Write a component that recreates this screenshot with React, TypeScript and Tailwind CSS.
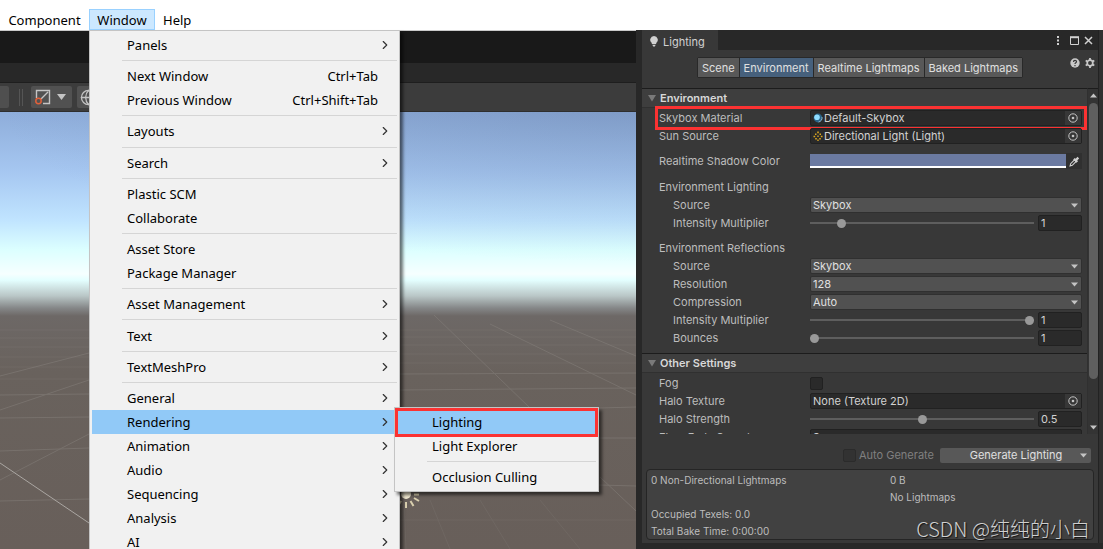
import React from 'react';
import { ChevronRight, Globe } from 'lucide-react';

type MenuEntry = { label: string; shortcut?: string; sub?: boolean } | 'sep';

const windowMenu: MenuEntry[] = [
  { label: 'Panels', sub: true },
  'sep',
  { label: 'Next Window', shortcut: 'Ctrl+Tab' },
  { label: 'Previous Window', shortcut: 'Ctrl+Shift+Tab' },
  'sep',
  { label: 'Layouts', sub: true },
  'sep',
  { label: 'Search', sub: true },
  'sep',
  { label: 'Plastic SCM' },
  { label: 'Collaborate' },
  'sep',
  { label: 'Asset Store' },
  { label: 'Package Manager' },
  'sep',
  { label: 'Asset Management', sub: true },
  'sep',
  { label: 'Text', sub: true },
  'sep',
  { label: 'TextMeshPro', sub: true },
  'sep',
  { label: 'General', sub: true },
  { label: 'Rendering', sub: true },
  { label: 'Animation', sub: true },
  { label: 'Audio', sub: true },
  { label: 'Sequencing', sub: true },
  { label: 'Analysis', sub: true },
  { label: 'AI', sub: true },
];

const Separator = () => (
  <li role="separator" className="flex min-h-[7px] grow items-center pl-[30px]">
    <span className="h-px w-full bg-[#d5d5d5]" />
  </li>
);

/* Submenu that opens next to "Rendering" */
const RenderingMenu = () => (
  <ul className="absolute -top-[3px] left-[302px] z-30 w-[205px] border border-[#c4c4c4] bg-[#f1f1f1] p-[2px] shadow-[3px_3px_3px_rgba(0,0,0,0.55)]">
    <li className="relative">
      <button className="flex h-6 w-full items-center bg-[#91c9f7] pl-[35px]">Lighting</button>
      <span className="pointer-events-none absolute -inset-x-[2px] -top-[2px] h-[29px] border-[3px] border-[#fb3232]" />
    </li>
    <li>
      <button className="flex h-6 w-full items-center pl-[35px]">Light Explorer</button>
    </li>
    <Separator />
    <li>
      <button className="flex h-6 w-full items-center pl-[35px]">Occlusion Culling</button>
    </li>
  </ul>
);

const WindowMenu = () => (
  <ul className="absolute top-full left-0 z-20 flex h-[527px] w-[311px] flex-col border border-[#c4c4c4] bg-[#f1f1f1] p-[2px] shadow-[3px_3px_3px_rgba(0,0,0,0.55)]">
    {windowMenu.map((entry, index) =>
      entry === 'sep' ? (
        <Separator key={index} />
      ) : (
        <li key={index} className="relative">
          <button
            className={`flex h-6 w-full items-center pr-[5px] pl-[35px] ${
              entry.label === 'Rendering' ? 'bg-[#91c9f7]' : ''
            }`}
          >
            <span className="grow text-left">{entry.label}</span>
            {entry.shortcut && <span className="pr-[14px]">{entry.shortcut}</span>}
            {entry.sub && <ChevronRight className="size-[14px] text-[#333]" />}
          </button>
          {entry.label === 'Rendering' && <RenderingMenu />}
        </li>
      ),
    )}
  </ul>
);

const MenuBar = () => (
  <nav className="flex h-[30px] shrink-0 items-end bg-white font-['Noto_Sans',sans-serif] text-[13px] leading-5 text-black">
    <button className="h-[21px] w-[89px]">Component</button>
    <div className="relative">
      <button className="h-[21px] w-[66px] border border-[#99d1ff] bg-[#cce8ff]">Window</button>
      <WindowMenu />
    </div>
    <button className="h-[21px] px-2">Help</button>
  </nav>
);

/* Side shading of the sky, ground grid, sun gizmo */
const SceneGrid = () => (
  <svg
    className="size-full"
    viewBox="0 112 636 437"
    preserveAspectRatio="xMinYMin slice"
    fill="none"
    stroke="#8a8580"
    strokeWidth="1"
    aria-hidden="true"
  >
    <defs>
      <radialGradient id="sky" cx="1" cy="0" r="1">
        <stop offset="0" stopColor="#50648c" stopOpacity="0.24" />
        <stop offset="1" stopColor="#50648c" stopOpacity="0" />
      </radialGradient>
    </defs>
    <rect x="0" y="112" width="636" height="150" fill="url(#sky)" stroke="none" />
    <g opacity="0.45">
      <path d="M0 480 89 434M0 410 89 380M0 376 89 353" />
      <path d="M0 451 89 448M0 501 89 499M0 418 89 417M0 395 89 394" />
      <path d="M434 315 530 408M490 324 636 395M550 320 636 356M600 477 636 511" />
      <path d="M400 390 636 388M599 408 636 407M599 438 636 438M599 485 636 486M400 374 636 373" />
    </g>
    <g opacity="0.2">
      <path d="M0 379H89M0 367H89M0 357H89M0 347H89M0 338H89M0 330H89" />
      <path d="M400 363H636M400 354H636M400 345H636M400 337H636M400 330H636M404 500 406 549" />
      <path d="M430 500 450 549M480 500 510 549M540 500 580 549M400 520H636" />
    </g>
    <path d="M0 463 89 523" stroke="#aaa6a2" />
    <circle cx="406" cy="494" r="5" fill="#efe7cf" stroke="none" />
    <path
      d="M406 502v6M410.500 501l3 5M414 498l5 3M414 494.500h5M401 501l-3 5"
      stroke="#d9cfae"
      strokeWidth="2"
    />
  </svg>
);

const SceneView = () => (
  <section aria-label="Scene" className="flex min-w-0 flex-[636_1_0%] flex-col">
    <div className="h-[33px] shrink-0 border-t border-[#c9c9c9] bg-[#191919]" />
    <div className="h-5 shrink-0 border-b border-[#1e1e1e] bg-[#282828]" />
    <div className="flex h-[29px] shrink-0 items-center border-b border-[#2e2e2e] bg-[#3c3c3c]">
      <div className="h-[22px] w-[9px] rounded-r-xs bg-[#4f4f4f]" />
      <div className="ml-[10px] h-[17px] w-1 border-x border-[#555]" />
      <button
        aria-label="Tool handle"
        className="ml-2 flex h-[22px] w-[41px] items-center gap-[6px] rounded-xs bg-[#515151] pl-1"
      >
        <svg className="size-4" viewBox="0 0 16 16" fill="none" stroke="#c4c4c4">
          <path d="M1.500 9V1.500h13v13H8M6 10l7-7" strokeWidth="1.400" />
          <circle cx="3.500" cy="12" r="2.700" stroke="#e0603a" strokeWidth="1.500" />
        </svg>
        <svg className="h-[6px] w-[9px]" viewBox="0 0 9 6" fill="#c4c4c4">
          <path d="M0 0h9L4.500 6z" />
        </svg>
      </button>
      <button
        aria-label="Tool rotation"
        className="ml-[5px] flex h-[22px] w-[41px] items-center rounded-xs bg-[#515151] pl-[3px]"
      >
        <Globe className="size-[17px] text-[#c4c4c4]" strokeWidth={1.8} />
      </button>
    </div>
    <div className="min-h-0 grow bg-[linear-gradient(#8eadda_0px,#a6c7f1_60px,#c0e4ff_108px,#dcffff_138px,#f6ffff_162px,#e4ffff_168px,#b9c6c6_184px,#858788_196px,#6d6866_204px,#69625d_260px,#685f5a_437px)]">
      <SceneGrid />
    </div>
  </section>
);

const Arrow = ({ className = '' }: { className?: string }) => (
  <svg className={`h-[5px] w-[7px] ${className}`} viewBox="0 0 7 5" fill="#c4c4c4" aria-hidden="true">
    <path d="M0 0.500h7L3.500 4.500z" />
  </svg>
);

const Row = ({ label, indent, children }: { label: string; indent?: boolean; children?: React.ReactNode }) => (
  <div className="relative flex h-[18px] shrink-0 items-center pr-[5px]">
    <span className={`w-[168px] shrink-0 ${indent ? 'pl-[31px]' : 'pl-[17px]'}`}>{label}</span>
    {children}
  </div>
);

const Dropdown = ({ label, value }: { label: string; value: string }) => (
  <div className="relative flex grow items-center">
    <select
      aria-label={label}
      defaultValue={value}
      className="h-4 w-full appearance-none rounded-xs border border-[#303030] bg-[#515151] pl-[2px] leading-3 text-[#e0e0e0]"
    >
      <option>{value}</option>
    </select>
    <Arrow className="pointer-events-none absolute right-1" />
  </div>
);

const NumberBox = ({ label, value, wide }: { label: string; value: string; wide?: boolean }) => (
  <input
    aria-label={label}
    defaultValue={value}
    className={`h-4 rounded-xs border border-[#212121] bg-[#2a2a2a] px-[2px] text-[#d2d2d2] ${
      wide ? 'w-full' : 'w-11 shrink-0'
    }`}
  />
);

type SliderProps = { label: string; value: number; min?: number; max: number; step?: number };

const SliderField = ({ label, value, min = 0, max, step = 0.1 }: SliderProps) => (
  <div className="flex min-w-0 grow items-center gap-1">
    <input
      type="range"
      aria-label={label}
      min={min}
      max={max}
      step={step}
      defaultValue={value}
      className="h-[10px] min-w-0 grow appearance-none bg-[linear-gradient(#5e5e5e,#5e5e5e)] bg-[length:100%_2px] bg-center bg-no-repeat [&::-webkit-slider-thumb]:size-[9px] [&::-webkit-slider-thumb]:appearance-none [&::-webkit-slider-thumb]:rounded-full [&::-webkit-slider-thumb]:bg-[#999]"
    />
    <NumberBox label={`${label} value`} value={String(value)} />
  </div>
);

const ObjectField = ({ value, icon }: { value: string; icon?: React.ReactNode }) => (
  <div className="flex h-4 grow items-center rounded-xs border border-[#212121] bg-[#2a2a2a] text-[#d2d2d2]">
    <button className="flex h-full grow items-center gap-[1px] pl-[2px]">
      {icon}
      {value}
    </button>
    <button
      aria-label={`Select ${value}`}
      className="flex h-full w-4 items-center justify-center bg-[#373737]"
    >
      <svg className="size-[10px]" viewBox="0 0 10 10" fill="none" stroke="#c4c4c4">
        <circle cx="5" cy="5" r="4.200" />
        <circle cx="5" cy="5" r="1.300" fill="#c4c4c4" stroke="none" />
      </svg>
    </button>
  </div>
);

const SectionHeader = ({ title }: { title: string }) => (
  <button className="flex h-5 shrink-0 items-center border-t border-b border-t-[#1c1c1c] border-b-[#303030] bg-[#3e3e3e] pl-[6px] font-semibold text-[#d8d8d8]">
    <svg className="mr-[4px] size-2" viewBox="0 0 8 8" fill="#7a7a7a">
      <path d="M0 1h8L4 7.500z" />
    </svg>
    {title}
  </button>
);

const MaterialIcon = () => (
  <svg className="size-[10px]" viewBox="0 0 10 10">
    <circle cx="5" cy="5" r="4.400" fill="#2a6488" />
    <circle cx="4" cy="4.300" r="2.800" fill="#8edcff" />
    <path d="M5.500 9A4.200 4.200 0 0 0 9 4" fill="none" stroke="#b9d6e4" strokeWidth="0.700" />
  </svg>
);

const SunIcon = () => (
  <svg className="size-[10px]" viewBox="0 0 10 10" fill="#d9a520">
    <path d="M4.200 0.500h1.600v1.800H4.200zM2 2.500h1.500V4H2zM6.500 2.500H8V4H6.500zM0.500 4.800h1.700v1.500H0.500zM7.800 4.800h1.700v1.500H7.800zM2.200 7h1.600v1.500H2.200zM6.200 7h1.600v1.500H6.200zM4.300 4.500h1.400v1.400H4.300zM4.300 8.500h1.400V10H4.300z" />
  </svg>
);

const tabs = ['Scene', 'Environment', 'Realtime Lightmaps', 'Baked Lightmaps'];

const PanelTop = () => (
  <>
    <div className="flex h-5 shrink-0 items-center bg-[#282828]">
      <div className="flex h-full w-[76px] items-center gap-[5px] bg-[#383838] pt-[3px] pl-2 text-[#d2d2d2]">
        <svg className="h-[11px] w-2" viewBox="0 0 8 11" fill="#d0d0d0">
          <path d="M4 0a3.800 3.800 0 0 0-2.200 6.900V8h4.400V6.900A3.800 3.800 0 0 0 4 0zM2.300 8.700h3.400L4.800 10.500H3.200z" />
        </svg>
        Lighting
      </div>
      <div className="ml-auto flex items-center gap-[5px] pr-[5px]">
        <button aria-label="More">
          <svg className="h-[11px] w-[9px]" viewBox="0 0 9 11" fill="#d0d0d0">
            <path d="M1 1h2v2H1zM1 4.500h2v2H1zM1 8h2v2H1z" />
          </svg>
        </button>
        <button aria-label="Maximize">
          <svg className="size-[9px]" viewBox="0 0 9 9" fill="none" stroke="#d0d0d0">
            <path d="M0.500 1v7.500h8V1M0 1.500h9" />
            <path d="M0 1.200h9" strokeWidth="2" />
          </svg>
        </button>
        <button aria-label="Close">
          <svg className="size-[9px]" viewBox="0 0 9 9" stroke="#d0d0d0" strokeWidth="1.500">
            <path d="M1 1l7 7M8 1l-7 7" />
          </svg>
        </button>
      </div>
    </div>
    <div className="relative flex h-[38px] shrink-0 items-center justify-center pr-[20px] pb-[3px]">
      <div className="flex gap-px rounded-xs border border-[#292929] bg-[#292929]">
        {tabs.map((t) => (
          <button
            key={t}
            className={`h-[19px] px-1 whitespace-nowrap text-[#e0e0e0] ${
              t === 'Environment' ? 'bg-[#46607c]' : 'bg-[#585858]'
            }`}
          >
            {t}
          </button>
        ))}
      </div>
      <div className="absolute top-2 right-[3px] flex gap-[5px]">
        <button aria-label="Help">
          <svg className="size-[10px]" viewBox="0 0 10 10">
            <circle cx="5" cy="5" r="4.700" fill="#c8c8c8" />
            <path d="M3.500 4c0-2 3-2 3-0.300C6.500 4.900 5 4.700 5 6M5 7v1.200" fill="none" stroke="#383838" strokeWidth="1.200" />
          </svg>
        </button>
        <button aria-label="Settings">
          <svg className="size-[10px]" viewBox="0 0 10 10" fill="none" stroke="#c8c8c8">
            <circle cx="5" cy="5" r="2.800" strokeWidth="1.700" />
            <path
              d="M5 0v2M5 8v2M0.700 2.500l1.700 1M7.600 6.500l1.700 1M0.700 7.500l1.700-1M7.600 3.500l1.700-1"
              strokeWidth="1.800"
            />
          </svg>
        </button>
      </div>
    </div>
  </>
);

const Settings = () => (
  <div className="flex min-h-0 grow">
    <div className="flex min-w-0 grow flex-col overflow-hidden">
      <SectionHeader title="Environment" />
      <div className="flex flex-col pt-[1px] pb-[6px]">
        <Row label="Skybox Material">
          <ObjectField value="Default-Skybox" icon={<MaterialIcon />} />
          <span className="pointer-events-none absolute -top-[3px] right-0 left-[13px] h-6 border-[3px] border-[#fb3232]" />
        </Row>
        <Row label="Sun Source">
          <ObjectField value="Directional Light (Light)" icon={<SunIcon />} />
        </Row>
        <div className="h-[7px]" />
        <Row label="Realtime Shadow Color">
          <button aria-label="Shadow color" className="h-[14px] grow border-b-2 border-white bg-[#6b7aa1]" />
          <button aria-label="Pick color" className="flex h-4 w-4 items-center justify-center bg-[#303030]">
            <svg className="size-[11px]" viewBox="0 0 10 10" fill="none" stroke="#d0d0d0">
              <path d="M1 9l0.500-2L5 3.500 6.500 5 3 8.500z" />
              <path d="M6 4l2.500-2.500M4.500 2.500l3 3" strokeWidth="2" />
            </svg>
          </button>
        </Row>
        <div className="h-2" />
        <Row label="Environment Lighting" />
        <Row label="Source" indent>
          <Dropdown label="Lighting source" value="Skybox" />
        </Row>
        <Row label="Intensity Multiplier" indent>
          <SliderField label="Lighting intensity" value={1} max={8} />
        </Row>
        <div className="h-[7px]" />
        <Row label="Environment Reflections" />
        <Row label="Source" indent>
          <Dropdown label="Reflection source" value="Skybox" />
        </Row>
        <Row label="Resolution" indent>
          <Dropdown label="Resolution" value="128" />
        </Row>
        <Row label="Compression" indent>
          <Dropdown label="Compression" value="Auto" />
        </Row>
        <Row label="Intensity Multiplier" indent>
          <SliderField label="Reflection intensity" value={1} max={1} />
        </Row>
        <Row label="Bounces" indent>
          <SliderField label="Bounces" value={1} min={1} max={5} step={1} />
        </Row>
      </div>
      <SectionHeader title="Other Settings" />
      <div className="flex flex-col pt-[1px]">
        <Row label="Fog">
          <input
            type="checkbox"
            aria-label="Fog"
            className="size-[13px] appearance-none rounded-xs border border-[#212121] bg-[#2a2a2a]"
          />
        </Row>
        <Row label="Halo Texture">
          <ObjectField value="None (Texture 2D)" />
        </Row>
        <Row label="Halo Strength">
          <SliderField label="Halo strength" value={0.5} max={1} />
        </Row>
        <Row label="Flare Fade Speed">
          <NumberBox label="Flare fade speed" value="3" wide />
        </Row>
      </div>
    </div>
    <div className="flex w-[11px] shrink-0 flex-col items-center border-t border-l border-t-[#1c1c1c] border-l-[#303030] bg-[#343434] py-1">
      <Arrow className="rotate-180" />
      <div className="my-[5px] flex min-h-0 w-[9px] grow">
        <div className="h-[87%] w-full rounded-full bg-[#5f5f5f]" />
      </div>
      <Arrow />
    </div>
  </div>
);

const BakeFooter = () => (
  <footer className="shrink-0 px-1 pt-[13px] pb-[3px]">
    <div className="flex h-4 items-center justify-end pr-[3px]">
      <label className="flex items-center gap-[3px] pr-[6px] text-[#808080]">
        <input
          type="checkbox"
          disabled
          className="size-[13px] appearance-none rounded-xs border border-[#2b2b2b] bg-[#323232]"
        />
        Auto Generate
      </label>
      <button className="flex h-[15px] w-[151px] items-center rounded-xs bg-[#585858] pr-1 pl-3 text-[#e0e0e0]">
        <span className="grow">Generate Lighting</span>
        <Arrow />
      </button>
    </div>
    <div className="mt-[6px] grid h-[71px] grid-cols-[239px_1fr] grid-rows-4 items-center rounded-sm border border-[#252525] bg-[#414141] pt-[2px] pl-1 text-[10px]">
      <span>0 Non-Directional Lightmaps</span>
      <span>0 B</span>
      <span className="col-start-2">No Lightmaps</span>
      <span className="col-start-1">Occupied Texels: 0.0</span>
      <span className="col-start-1">Total Bake Time: 0:00:00</span>
    </div>
  </footer>
);

export default function App() {
  return (
    <div className="relative flex h-screen flex-col overflow-hidden bg-[#303030]">
      <MenuBar />
      <main className="flex min-h-0 grow">
        <SceneView />
        <section
          aria-label="Lighting"
          className="flex min-w-0 flex-[461_1_0%] bg-[#282828] pb-[6px] pl-[6px] font-[Inter,sans-serif] text-[11px] leading-[14px] text-[#bdbdbd]"
        >
          <div className="flex min-w-0 grow flex-col bg-[#383838]">
            <PanelTop />
            <Settings />
            <BakeFooter />
          </div>
          <div className="w-[5px] shrink-0 border-l border-[#222] bg-[#303030]" />
        </section>
      </main>
      <p className="pointer-events-none absolute right-[13px] bottom-2 font-['Noto_Sans_CJK_SC',sans-serif] text-xl leading-6 font-light text-[#d0d0d0] [text-shadow:1px_1px_1px_#111]">
        CSDN @纯纯的小白
      </p>
    </div>
  );
}
